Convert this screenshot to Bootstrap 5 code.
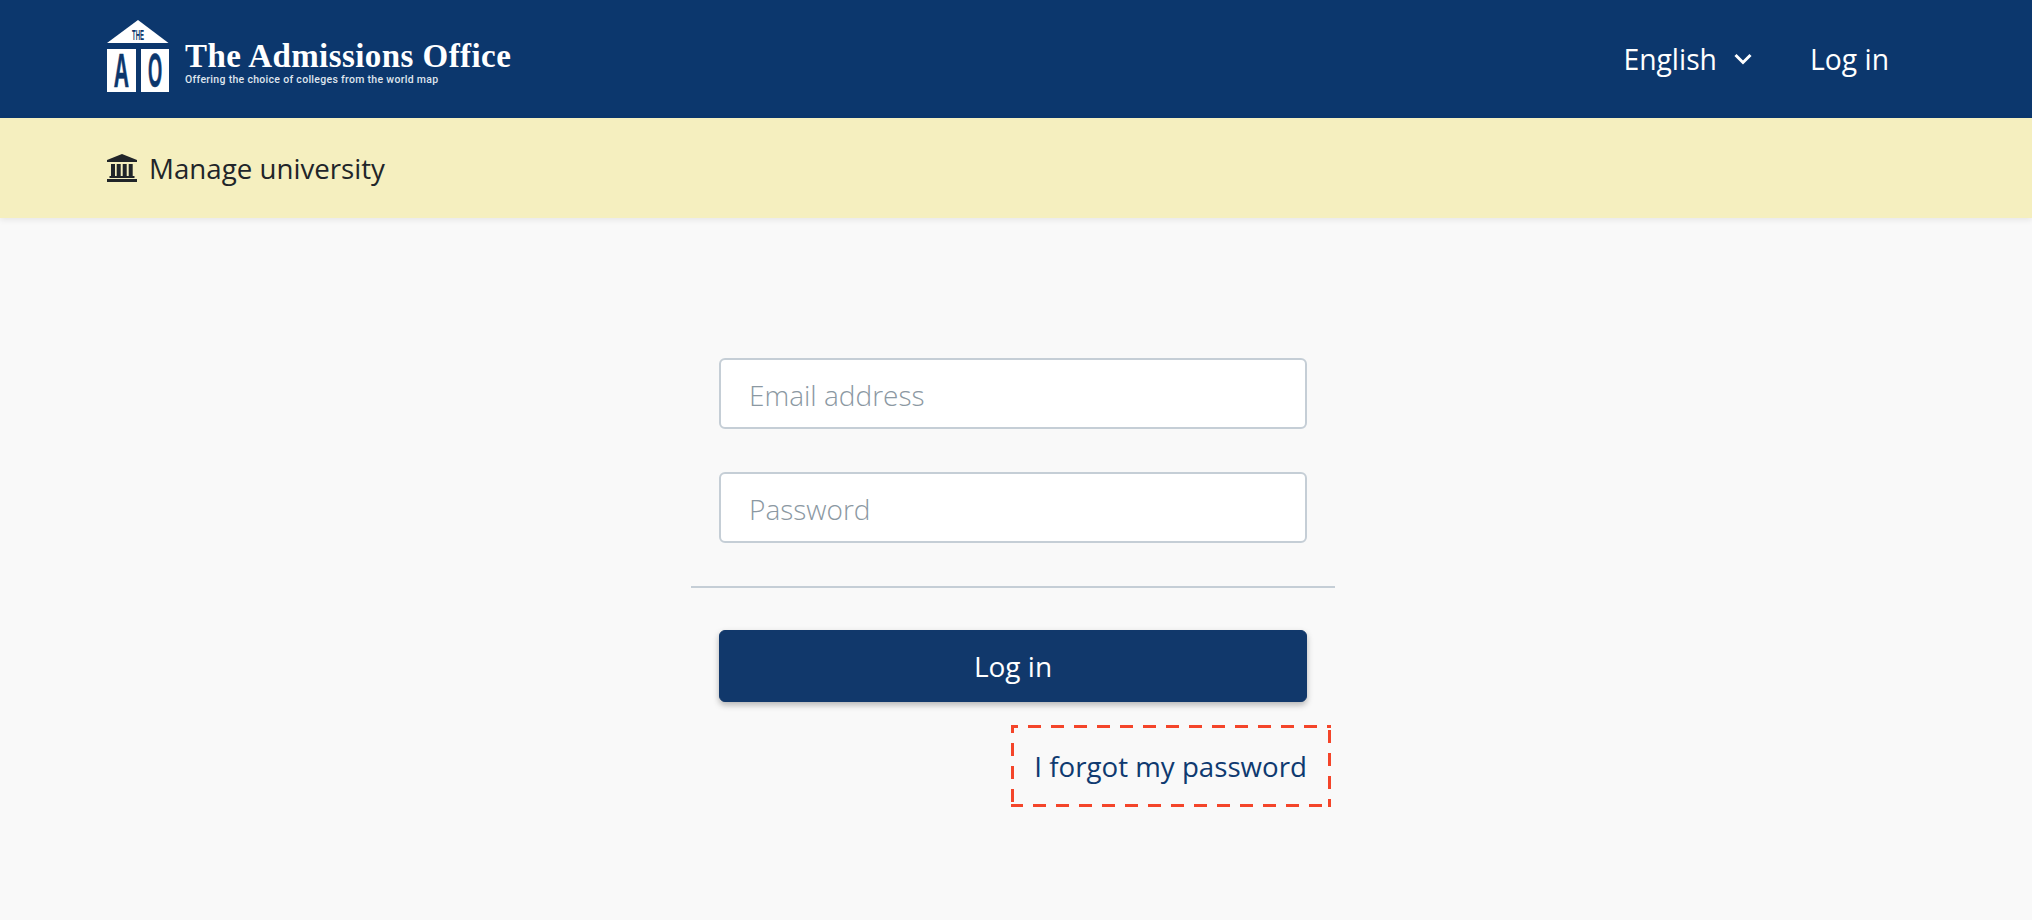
<!DOCTYPE html>
<html lang="en">
<head>
  <meta charset="UTF-8" />
  <meta name="viewport" content="width=device-width, initial-scale=1" />
  <title>The Admissions Office - Log in</title>
  <link href="https://cdn.jsdelivr.net/npm/bootstrap@5.3.0/dist/css/bootstrap.min.css" rel="stylesheet" />
  <style>
    body { background-color: #f9f9f9; font-family: "Open Sans", sans-serif; font-size: 28px; color: #212529; min-height: 920px; }
    .ao-top { height: 118px; background-color: #0c376d; padding: 20px 143px 0 107px; align-items: flex-start; }
    .ao-logo { width: 62px; height: 80px; flex: none; }
    .ao-brand { margin-left: 16px; color: #fff; }
    .ao-title { font-family: "Liberation Serif", serif; font-weight: 700; font-size: 33px; line-height: 36px; letter-spacing: .43px; margin-top: 18px; white-space: nowrap; }
    .ao-tag { font-family: Roboto, sans-serif; font-weight: 500; font-size: 10.5px; line-height: 13px; margin-top: -1px; letter-spacing: .3px; color: #dfe5ee; white-space: nowrap; }
    .ao-links { margin-top: 20px; gap: 58px; color: #fff; font-size: 28.300px; line-height: 38px; }
    .ao-links a { color: #fff; text-decoration: none; }
    .ao-lang { gap: 17px; }
    .ao-sub { height: 100px; background-color: #f5efbf; padding-left: 107px; gap: 12px; font-size: 27.700px; box-shadow: 0 2px 6px rgba(0, 0, 0, .08); }
    .ao-sub span { padding-top: 2px; }
    .ao-form { width: 644px; margin: 140px 0 0 calc(50% - 325px); }
    .ao-fields { padding: 0 28px; }
    .ao-form .form-control { height: 71px; font-size: 28px; padding: 2px 28px 0; border: 2px solid #c5ced6; border-radius: 6px; margin-bottom: 43px; font-weight: 300; }
    .ao-form .form-control::placeholder { color: #8b98a2; }
    .ao-rule { margin: 0 0 42px; border-top: 2px solid #c5ced6; opacity: 1; }
    .ao-submit { width: 100%; height: 72px; padding-top: 6px; font-size: 28px; background-color: #11386b; border-color: #11386b; color: #fff; border-radius: 6px; box-shadow: 0 3px 6px rgba(0, 0, 0, .28); }
    .ao-forgot {
      width: 320px; height: 82px; margin: 23px 4px 0 auto; padding: 2px 24px 0 0;
      color: #0f3a70; font-size: 27.700px; text-decoration: none; white-space: nowrap;
      background-image:
        linear-gradient(90deg, #f4452a 13px, transparent 13px),
        linear-gradient(90deg, #f4452a 13px, transparent 13px),
        linear-gradient(180deg, #f4452a 13px, transparent 13px),
        linear-gradient(180deg, #f4452a 13px, transparent 13px);
      background-size: 23px 3px, 23px 3px, 3px 23px, 3px 23px;
      background-repeat: repeat-x, repeat-x, repeat-y, repeat-y;
      background-position: 17px 0, 22px 100%, 0 18px, 100% 5px;
    }
  </style>
</head>
<body>
  <header class="ao-top d-flex justify-content-between">
    <div class="d-flex">
      <svg class="ao-logo" viewBox="0 0 62 80" role="img" aria-label="The Admissions Office logo">
        <path fill="#fff" d="M31 0 61.500 23H0Z" />
        <rect fill="#fff" x="0" y="29" width="29" height="43" />
        <rect fill="#fff" x="34" y="29" width="28" height="43" />
        <text x="31" y="19.500" text-anchor="middle" fill="#0c376d" font-family="Liberation Sans, sans-serif" font-weight="700" font-size="14" textLength="12" lengthAdjust="spacingAndGlyphs">THE</text>
        <text transform="translate(14.500 67) scale(.44 1)" text-anchor="middle" fill="#0c376d" stroke="#0c376d" stroke-width=".7" font-family="Liberation Sans, sans-serif" font-weight="700" font-size="48">A</text>
        <text transform="translate(48 67) scale(.38 1)" text-anchor="middle" fill="#0c376d" stroke="#0c376d" stroke-width=".7" font-family="Liberation Sans, sans-serif" font-weight="700" font-size="48">O</text>
      </svg>
      <div class="ao-brand">
        <div class="ao-title">The Admissions Office</div>
        <div class="ao-tag">Offering the choice of colleges from the world map</div>
      </div>
    </div>
    <nav class="ao-links d-flex">
      <a href="#" class="ao-lang d-flex align-items-center">English
        <svg width="18" height="12" viewBox="0 0 18 12" aria-hidden="true"><path d="M1.500 2 9 9.500 16.500 2" fill="none" stroke="#fff" stroke-width="3" /></svg>
      </a>
      <a href="#">Log in</a>
    </nav>
  </header>

  <div class="ao-sub d-flex align-items-center">
    <svg width="30" height="28" viewBox="0 0 30 28" aria-hidden="true">
      <path fill="#212529" d="M15 0 30 6V8H0V6Z" />
      <path fill="#212529" d="M4 10h4v12H4ZM9.700 10h4v12h-4ZM15.700 10h4v12h-4ZM21.700 10h4v12h-4ZM2.500 22h25v2h-25ZM0 25h30v3H0Z" />
    </svg>
    <span>Manage university</span>
  </div>

  <form class="ao-form">
    <div class="ao-fields">
      <input type="email" class="form-control" placeholder="Email address" />
      <input type="password" class="form-control" placeholder="Password" />
    </div>
    <hr class="ao-rule" />
    <div class="ao-fields">
      <button type="button" class="btn ao-submit">Log in</button>
    </div>
    <a href="#" class="ao-forgot d-flex align-items-center justify-content-end">I forgot my password</a>
  </form>
</body>
</html>
